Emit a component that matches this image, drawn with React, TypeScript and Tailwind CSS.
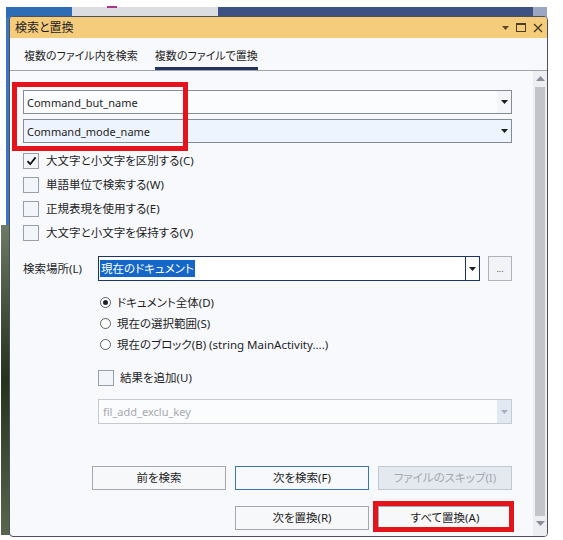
import { ReactNode } from "react";

const Arrow = (props: { color?: string }) => (
  <svg width="7" height="4" viewBox="0 0 7 4">
    <polygon points="0,0 7,0 3.5,4" fill={props.color ?? "#1b1b1b"} />
  </svg>
);

const CheckBox = (props: { checked?: boolean }) => (
  <div className="flex h-[16px] w-[16px] shrink-0 items-center justify-center border border-[#9aa0a8] bg-[#f2f5fa]">
    {props.checked && (
      <svg width="11" height="10" viewBox="0 0 11 10">
        <path d="M1.5 5.2 L4.2 8.2 L9.6 1.4" stroke="#111" strokeWidth="1.8" fill="none" />
      </svg>
    )}
  </div>
);

const Radio = (props: { checked?: boolean }) => (
  <div className="flex h-[11px] w-[11px] shrink-0 items-center justify-center rounded-full border border-[#5c5f66] bg-white">
    {props.checked && <div className="h-[5px] w-[5px] rounded-full bg-[#222]" />}
  </div>
);

const Button = (props: { children: ReactNode; variant?: "default" | "primary" | "disabled" }) => {
  const v = props.variant ?? "default";
  const cls =
    v === "primary"
      ? "border-[#3a78b0] bg-[#f7f9fc] text-[#1e1e1e]"
      : v === "disabled"
        ? "border-[#c3c8d0] bg-[#e4e8ef] text-[#a2a8b1]"
        : "border-[#a3a8b0] bg-[#f7f8fa] text-[#1e1e1e]";
  return (
    <div className={`flex h-[24px] w-[134px] items-center justify-center border ${cls}`}>
      {props.children}
    </div>
  );
};

export default function App() {
  const options = [
    { label: "大文字と小文字を区別する(C)", checked: true },
    { label: "単語単位で検索する(W)" },
    { label: "正規表現を使用する(E)" },
    { label: "大文字と小文字を保持する(V)" },
  ];
  const scopes = [
    { label: "ドキュメント全体(D)", checked: true },
    { label: "現在の選択範囲(S)" },
    { label: "現在のブロック(B) (string MainActivity....)" },
  ];

  return (
    <div className="relative h-[540px] w-[563px] overflow-hidden bg-white font-['Noto_Sans','Noto_Sans_CJK_JP',sans-serif] text-[11.5px] leading-none text-[#1e1e1e] [font-feature-settings:'palt']">
      {/* windows behind the dialog */}
      <div className="absolute left-[6px] top-[7px] flex h-[10px] w-[541px]">
        <div className="w-[66px] bg-[#2e6cb6]" />
        <div className="relative w-[146px] bg-[#dcdde0]">
          <div className="absolute left-[35px] top-[-1px] h-[2px] w-[10px] bg-[#b0308a]" />
        </div>
        <div className="flex-1 bg-[#3e5183]" />
        <div className="w-[14px] bg-[#9aa6c4]" />
      </div>
      <div className="absolute left-[6px] top-[17px] h-[210px] w-[4px] bg-[#3a76c2]" />
      <div className="absolute left-[1px] top-[225px] h-[310px] w-[9px] bg-gradient-to-b from-[#6d7a68] via-[#26321f] to-[#59664f]" />

      {/* dialog */}
      <div className="absolute left-[9px] top-[16px] flex h-[521px] w-[539px] flex-col overflow-hidden rounded-[4px] border border-[#4d5058] bg-[#f7f9fd]">
        <div className="flex h-[21px] shrink-0 items-center bg-[#f5cb7c] pl-[5px] pr-[4px]">
          <span className="flex-1 text-[12px]">検索と置換</span>
          <div className="flex items-center gap-[7px]">
            <Arrow color="#5b4b2c" />
            <div className="h-[9px] w-[10px] border border-t-[2px] border-[#4a3e28]" />
            <svg width="10" height="10" viewBox="0 0 10 10">
              <path d="M1 1 L9 9 M9 1 L1 9" stroke="#4a3e28" strokeWidth="1.4" />
            </svg>
          </div>
        </div>

        <div className="flex h-[33px] shrink-0 items-stretch gap-[17px] border-b border-[#9fa3aa] bg-[#f8f9fc] pl-[14px] text-[11px]">
          <div className="flex items-center pt-[2px]">複数のファイル内を検索</div>
          <div className="flex items-center border-b-[3px] border-[#23345f] pt-[5px]">複数のファイルで置換</div>
        </div>

        <div className="flex flex-1">
          <div className="relative flex flex-1 flex-col pl-[13px] pr-[21px] pt-[19px]">
            <div className="flex flex-col gap-[5px] text-[11px]">
              <div className="flex h-[24px] items-center border border-[#868c96] bg-[#fbfcfe]">
                <span className="flex-1 pl-[3px]">Command_but_name</span>
                <div className="flex h-full w-[14px] items-center justify-center bg-[#f3f5f9]">
                  <Arrow />
                </div>
              </div>
              <div className="flex h-[24px] items-center border border-[#868c96] bg-[#eef4fd]">
                <span className="flex-1 pl-[3px]">Command_mode_name</span>
                <div className="flex h-full w-[14px] items-center justify-center">
                  <Arrow />
                </div>
              </div>
            </div>

            <div className="mt-[10px] flex flex-col gap-[8px]">
              {options.map((o) => (
                <div key={o.label} className="flex h-[16px] items-center gap-[7px]">
                  <CheckBox checked={o.checked} />
                  <span>{o.label}</span>
                </div>
              ))}
            </div>

            <div className="mt-[15px] flex h-[25px] items-center">
              <span className="w-[75px]">検索場所(L)</span>
              <div className="flex h-full flex-1 items-center border border-[#1d3566] bg-white">
                <div className="flex-1 pl-[1px]">
                  <span className="inline-block bg-[#1467c8] px-[1px] py-[3px] text-white">現在のドキュメント</span>
                </div>
                <div className="flex h-full w-[14px] items-center justify-center border-l border-[#1d3566]">
                  <Arrow />
                </div>
              </div>
              <div className="ml-[8px] flex h-full w-[24px] items-center justify-center border border-[#afb4bc] bg-[#f1f3f6] text-[9px] text-[#555]">
                ...
              </div>
            </div>

            <div className="ml-[77px] mt-[11px] flex flex-col">
              {scopes.map((s) => (
                <div key={s.label} className="flex h-[21px] items-center gap-[6px]">
                  <Radio checked={s.checked} />
                  <span>{s.label}</span>
                </div>
              ))}
            </div>

            <div className="ml-[75px] mt-[15px] flex h-[16px] items-center gap-[6px]">
              <CheckBox />
              <span>結果を追加(U)</span>
            </div>

            <div className="ml-[75px] mt-[13px] flex h-[25px] items-center border border-[#c6cad1] bg-[#fbfcfd]">
              <span className="flex-1 pl-[4px] text-[11px] text-[#a5a9b0]">fil_add_exclu_key</span>
              <div className="flex h-full w-[14px] items-center justify-center bg-[#e3e9f2]">
                <Arrow color="#a9b0bb" />
              </div>
            </div>

            <div className="mt-[42px] flex justify-end gap-[9px]">
              <Button>前を検索</Button>
              <Button variant="primary">次を検索(F)</Button>
              <Button variant="disabled">ファイルのスキップ(I)</Button>
            </div>
            <div className="mt-[16px] flex justify-end gap-[9px]">
              <Button>次を置換(R)</Button>
              <Button>すべて置換(A)</Button>
            </div>

            {/* annotation boxes */}
            <div className="absolute left-[2px] top-[11px] h-[69px] w-[176px] border-[5px] border-[#e3141c]" />
            <div className="absolute left-[363px] top-[430px] h-[31px] w-[141px] border-[5px] border-[#e3141c]" />
          </div>

          <div className="flex w-[14px] flex-col items-center bg-[#eceef2]">
            <div className="flex h-[14px] items-center pt-[1px]">
              <svg width="9" height="5" viewBox="0 0 9 5">
                <polygon points="0,5 9,5 4.5,0" fill="#8b8e98" />
              </svg>
            </div>
            <div className="mt-[2px] w-[10px] flex-1 bg-[#c3c4c9]" />
            <div className="flex h-[14px] items-center">
              <svg width="9" height="5" viewBox="0 0 9 5">
                <polygon points="0,0 9,0 4.5,5" fill="#8b8e98" />
              </svg>
            </div>
            <div className="h-[6px]" />
          </div>
        </div>
      </div>
    </div>
  );
}
